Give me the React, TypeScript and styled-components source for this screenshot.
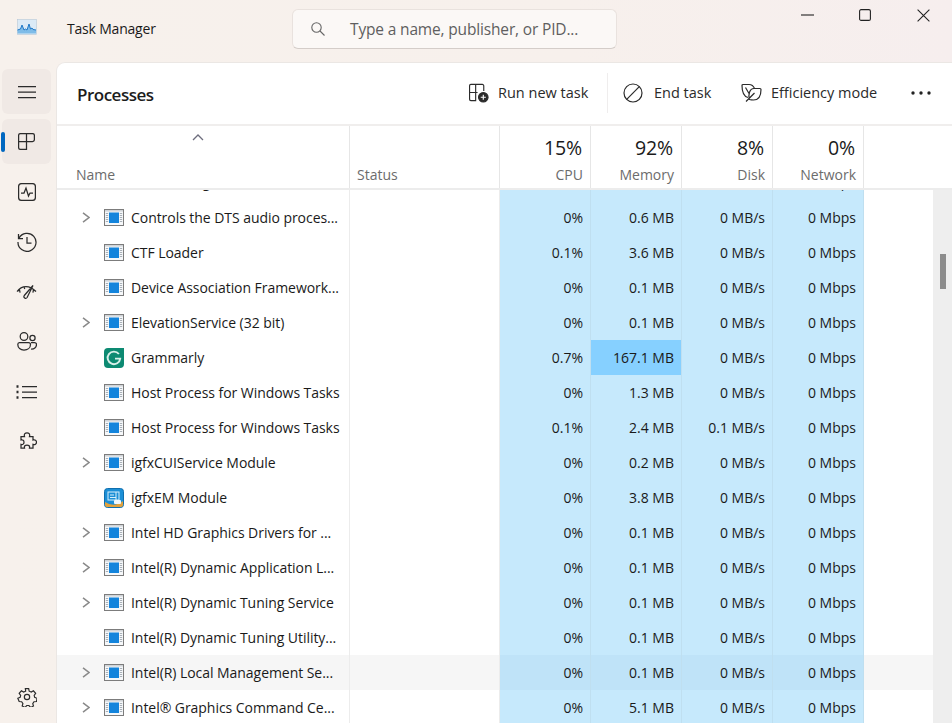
import React from "react";
import styled, { createGlobalStyle } from "styled-components";

const Global = createGlobalStyle`
  html, body { margin: 0; padding: 0; width: 952px; height: 723px; overflow: hidden; background: #f7f0eb; }
  body { font-family: "Open Sans", "Noto Sans", "Liberation Sans", sans-serif; color: #1a1a1a; }
  * { box-sizing: border-box; }
`;

const COLS = "293px 150px 91px 91px 91px 91px";

const Shell = styled.div`
  width: 952px; height: 723px; display: grid;
  grid-template-columns: 56px 1fr; grid-template-rows: 62px 1fr;
  background: linear-gradient(90deg, #f7f1ec 0%, #f7f0ec 60%, #f6eeee 100%);
  overflow: hidden;
`;
const TitleBar = styled.header`
  grid-column: 1 / 3; display: flex; align-items: flex-start; position: relative;
`;
const AppIcon = styled.svg`
  width: 20px; height: 20px; margin: 18px 0 0 17px; flex: none;
`;
const AppTitle = styled.div`
  margin: 20px 0 0 30px; width: 225px; font-size: 14px; line-height: 18px; letter-spacing: -0.2px;
`;
const Search = styled.div`
  width: 325px; height: 40px; margin-top: 9px; background: #fbf8f6;
  border: 1px solid #e9e2de; border-bottom-color: #d4cdc9; border-radius: 6px;
  display: flex; align-items: center; padding-left: 18px; gap: 25px;
  color: #5f5f5f; font-size: 15.5px; letter-spacing: -0.16px;
`;
const WindowButtons = styled.div`
  margin-left: auto; display: flex; padding-top: 7px;
`;
const WinBtn = styled.div`
  width: 58px; height: 16px; display: flex; align-items: center; justify-content: center;
`;
const Sidebar = styled.nav`
  display: flex; flex-direction: column; align-items: flex-start; padding: 7px 0 4px 2px; height: 661px;
`;
const NavBtn = styled.div<{ $active?: boolean; $tone?: boolean }>`
  width: 49px; height: 45px; border-radius: 6px; margin-bottom: 5px;
  background: ${p => (p.$active || p.$tone ? "#f0e9e5" : "transparent")};
  display: flex; align-items: center; justify-content: center; position: relative; flex: none;
`;
const BottomNavBtn = styled(NavBtn)`
  margin-top: auto; margin-bottom: 0;
`;
const ActiveMark = styled.span`
  position: absolute; left: -1px; top: 13px; width: 4px; height: 20px; border-radius: 2px; background: #0067c0;
`;
const Main = styled.main`
  background: #fff; border-top-left-radius: 9px; border: 1px solid #ebe7e4; border-width: 1px 0 0 1px;
  display: flex; flex-direction: column; overflow: hidden; position: relative; height: 661px;
`;
const Toolbar = styled.div`
  height: 63px; flex: none; display: flex; align-items: center; border-bottom: 2px solid #f0eeed; padding: 0 0 2px 20px;
`;
const PageTitle = styled.h1`
  margin: 4px 0 0 0; font-size: 17px; font-weight: 600; color: #1c1c1c; letter-spacing: -0.5px; width: 392px; flex: none;
`;
const ToolBtn = styled.div<{ $w: number; $gap?: number }>`
  width: ${p => p.$w}px; flex: none; display: flex; align-items: center; font-size: 14.5px; gap: ${p => p.$gap ?? 9}px; color: #2a2a2a; white-space: nowrap;
`;
const ToolSep = styled.div`
  width: 1px; height: 40px; background: #efeded; margin: 0 15px 0 0; flex: none;
`;
const HeaderRow = styled.div`
  display: grid; grid-template-columns: ${COLS}; height: 64px; flex: none;
  border-bottom: 2px solid #ececec;
`;
const HeadCell = styled.div<{ $right?: boolean; $first?: boolean }>`
  border-right: 1px solid #e6e6e6; position: relative; display: flex; flex-direction: column; justify-content: flex-end;
  padding: 0 7px 4px ${p => (p.$first ? 19 : 7)}px; text-align: ${p => (p.$right ? "right" : "left")};
`;
const HeadPct = styled.div`
  font-size: 19.5px; line-height: 24px; color: #1a1a1a; margin: 0 1px 6px 0; letter-spacing: -0.1px;
`;
const HeadLabel = styled.div`
  font-size: 14px; line-height: 18px; color: #6c6c6c; letter-spacing: 0;
`;
const SortCaret = styled.svg`
  position: absolute; left: 135px; top: 8px; width: 12px; height: 7px;
`;
const Rows = styled.div`
  flex: 1; overflow: hidden; position: relative;
`;
const Row = styled.div<{ $hover?: boolean; $clipped?: boolean }>`
  display: grid; grid-template-columns: ${COLS};
  height: ${p => (p.$clipped ? 37 : 35)}px;
  margin-top: ${p => (p.$clipped ? -27 : 0)}px;
  background: ${p => (p.$hover ? "#f6f6f6" : "transparent")};
`;
const NameCell = styled.div`
  border-right: 1px solid #ececec; display: flex; align-items: center; padding-left: 24px; font-size: 14px; letter-spacing: -0.05px; color: #1a1a1a;
  min-width: 0; white-space: nowrap; overflow: hidden;
`;
const ChevronSlot = styled.div`
  width: 23px; flex: none; display: flex; align-items: center; padding-left: 1px;
`;
const IconSlot = styled.div`
  width: 27px; flex: none; display: flex; align-items: center;
`;
const StatusCell = styled.div`
  border-right: 1px solid #ececec;
`;
const DataCell = styled.div<{ $hot?: boolean; $hover?: boolean }>`
  background: ${p => (p.$hot ? "#86d0ff" : p.$hover ? "#bfe3f8" : "#c6e9fc")};
  border-right: 1px solid #bfdff0;
  display: flex; align-items: center; justify-content: flex-end; padding-right: 7px;
  font-size: 14px; letter-spacing: 0; color: #1a1a1a; white-space: nowrap;
`;
const ScrollTrack = styled.div`
  position: absolute; right: 0; top: 127px; bottom: 0; width: 19px; background: #eeeeee;
`;
const ScrollThumb = styled.div`
  position: absolute; left: 7px; top: 64px; width: 6px; height: 35px; background: #8c8c8c;
`;

const Chevron = () => (
  <svg width="8" height="11" viewBox="0 0 8 11"><path d="M1 .8l6 4.700-6 4.700" fill="none" stroke="#8a8a8a" strokeWidth="1.500" /></svg>
);
const ProcIcon = () => (
  <svg width="20" height="17" viewBox="0 0 20 17">
    <rect x=".5" y=".5" width="19" height="16" fill="#f6f8fa" stroke="#7c7c7c" />
    <rect x="1" y="1" width="18" height="1.600" fill="#d0d4d8" />
    <rect x="5" y="3.500" width="10" height="10.500" fill="#1384dc" />
    <path d="M1.800 4.500h2.400M1.800 6.500h2.400M1.800 8.500h2.400M1.800 10.500h2.400M1.800 12.500h2.400M15.800 4.500h2.400M15.800 6.500h2.400M15.800 8.500h2.400M15.800 10.500h2.400M15.800 12.500h2.400" stroke="#a8b0b8" />
  </svg>
);
const GrammarlyIcon = () => (
  <svg width="20" height="20" viewBox="0 0 20 20">
    <path d="M4 0h16v16a4 4 0 0 1-4 4H4a4 4 0 0 1-4-4V4a4 4 0 0 1 4-4z" fill="#0d8a72" />
    <path d="M14.900 6A6.300 6.300 0 1 0 16.200 10.600H11" fill="none" stroke="#d8efe9" strokeWidth="1.900" />
  </svg>
);
const EmIcon = () => (
  <svg width="20" height="20" viewBox="0 0 20 20">
    <rect x=".5" y=".5" width="19" height="19" rx="3" fill="#1c8fd6" stroke="#0f6fae" />
    <path d="M1 14q9 6 18-1v4a2 2 0 0 1-2 2H3a2 2 0 0 1-2-2z" fill="#e2a13b" />
    <rect x="4" y="4" width="11" height="8" fill="none" stroke="#d8f0fb" />
    <path d="M6 7h4M6 9.500h6M12 4v8" stroke="#d8f0fb" />
    <rect x="10" y="12" width="7" height="4" rx="1" fill="#eef7fc" />
  </svg>
);

const S = { fill: "none", stroke: "#2b2b2b", strokeWidth: 1.25 } as const;

const navIcons: React.ReactNode[] = [
  <svg key="0" width="18" height="14" viewBox="0 0 18 14" {...S}><path d="M0 1.500h18M0 7h18M0 12.500h18" /></svg>,
  <svg key="1" width="17" height="17" viewBox="0 0 17 17" {...S}><path d="M8.500.6H2.500A1.900 1.900 0 0 0 .6 2.500v12a1.900 1.900 0 0 0 1.900 1.900h6zM8.500.6h6a1.900 1.900 0 0 1 1.900 1.900v4.100a1.900 1.900 0 0 1-1.900 1.900H.6" /></svg>,
  <svg key="2" width="18" height="18" viewBox="0 0 18 18" {...S}><rect x=".6" y=".6" width="16.800" height="16.800" rx="3" /><path d="M3 10h3l2-5 2.500 8 1.500-3h3" /></svg>,
  <svg key="3" width="20" height="20" viewBox="0 0 20 20" {...S}><path d="M1.500 2v4.500H6M2 6.200A9 9 0 1 1 1 10M10 5v6h4.500" /></svg>,
  <svg key="4" width="21" height="14" viewBox="0 0 21 14" {...S}><path d="M1 6.500C3.500 3 6 1.500 10 1.500c4 0 7 1.800 10 5M1 6.500l2.500-1.600.6 2.800M20 6.500l-2.500-1.700-.6 2.900M8 1.500l.7 2.500M17 .5L8.300 10.500a1.700 1.700 0 0 0 2.800 2z" /></svg>,
  <svg key="5" width="20" height="19" viewBox="0 0 20 19" {...S}><circle cx="7" cy="4.500" r="3.800" /><circle cx="15.500" cy="6" r="2.600" /><path d="M2.500 10.500h9a2 2 0 0 1 2 2c0 3.500-3 5.500-6.500 5.500S.8 16 .8 12.500a2 2 0 0 1 1.700-2zM14 10.500h3.500a2 2 0 0 1 2 2c0 3-2.500 4.800-5.500 4.500" /></svg>,
  <svg key="6" width="21" height="14" viewBox="0 0 21 14" {...S}><path d="M6 1.500h15M6 7h15M6 12.500h15" /><path d="M.5 1.500h2M.5 7h2M.5 12.500h2" strokeWidth="2.500" /></svg>,
  <svg key="7" width="20" height="20" viewBox="0 0 20 20" {...S}><path d="M7.500 4.500C6.800 2 8.300.8 10 .8s3.200 1.200 2.500 3.700H16V8c2-.7 3.500.5 3.500 2.200S18 13 16 12.400V16h-3.500c.5-2-.7-3-2.500-3s-3 1-2.500 3H4v-3.600c1.800.6 3-.6 3-2.200S5.800 7.500 4 8V4.500z" /></svg>,
];

type P = { name: string; chev?: boolean; icon?: "g" | "e"; cpu: string; mem: string; disk?: string; hot?: boolean; hover?: boolean };
const data: P[] = [
  { name: "Controls the DTS audio proces...", chev: true, cpu: "0%", mem: "0.6 MB" },
  { name: "CTF Loader", cpu: "0.1%", mem: "3.6 MB" },
  { name: "Device Association Framework...", cpu: "0%", mem: "0.1 MB" },
  { name: "ElevationService (32 bit)", chev: true, cpu: "0%", mem: "0.1 MB" },
  { name: "Grammarly", icon: "g", cpu: "0.7%", mem: "167.1 MB", hot: true },
  { name: "Host Process for Windows Tasks", cpu: "0%", mem: "1.3 MB" },
  { name: "Host Process for Windows Tasks", cpu: "0.1%", mem: "2.4 MB", disk: "0.1 MB/s" },
  { name: "igfxCUIService Module", chev: true, cpu: "0%", mem: "0.2 MB" },
  { name: "igfxEM Module", icon: "e", cpu: "0%", mem: "3.8 MB" },
  { name: "Intel HD Graphics Drivers for ...", chev: true, cpu: "0%", mem: "0.1 MB" },
  { name: "Intel(R) Dynamic Application L...", chev: true, cpu: "0%", mem: "0.1 MB" },
  { name: "Intel(R) Dynamic Tuning Service", chev: true, cpu: "0%", mem: "0.1 MB" },
  { name: "Intel(R) Dynamic Tuning Utility...", cpu: "0%", mem: "0.1 MB" },
  { name: "Intel(R) Local Management Se...", chev: true, cpu: "0%", mem: "0.1 MB", hover: true },
  { name: "Intel® Graphics Command Ce...", chev: true, cpu: "0%", mem: "5.1 MB" },
];

const heads = [["15%", "CPU"], ["92%", "Memory"], ["8%", "Disk"], ["0%", "Network"]];

export default function App() {
  return (
    <Shell>
      <Global />
      <TitleBar>
        <AppIcon viewBox="0 0 20 20">
          <rect x=".5" y="1.500" width="19" height="15" fill="#dbeaf6" stroke="#b8c8d8" strokeWidth=".6" />
          <path d="M.5 12l3-1 1.500-4 2 5 1.500-1 1.500 1 2-6 1.500 5 1.500-1 1 1.500 3 .5v3.500H.5z" fill="#7fbce8" />
          <path d="M.5 12l3-1 1.500-4 2 5 1.500-1 1.500 1 2-6 1.500 5 1.500-1 1 1.500 3 .5" fill="none" stroke="#1f78c8" strokeWidth="1" />
        </AppIcon>
        <AppTitle>Task Manager</AppTitle>
        <Search>
          <svg width="14" height="14" viewBox="0 0 14 14" fill="none" stroke="#666" strokeWidth="1.100"><circle cx="5.500" cy="5.500" r="4.700" /><path d="M9 9l4.500 4.500" /></svg>
          <span>Type a name, publisher, or PID...</span>
        </Search>
        <WindowButtons>
          <WinBtn><svg width="13" height="2" viewBox="0 0 13 2"><path d="M0 1h13" stroke="#222" strokeWidth="1.100" /></svg></WinBtn>
          <WinBtn><svg width="12" height="12" viewBox="0 0 12 12" fill="none"><rect x=".6" y=".6" width="10.800" height="10.800" rx="1.500" stroke="#222" strokeWidth="1.100" /></svg></WinBtn>
          <WinBtn><svg width="13" height="13" viewBox="0 0 13 13"><path d="M.6.6l11.800 11.800M12.400.6L.6 12.400" stroke="#222" strokeWidth="1.100" /></svg></WinBtn>
        </WindowButtons>
      </TitleBar>
      <Sidebar>
        {navIcons.map((ic, i) => (
          <NavBtn key={i} $tone={i === 0} $active={i === 1}>
            {i === 1 && <ActiveMark />}
            {ic}
          </NavBtn>
        ))}
        <BottomNavBtn>
          <svg width="20" height="20" viewBox="0 0 24 24" {...S} strokeWidth={1.400}>
            <circle cx="12" cy="12" r="3.200" />
            <path d="M10 2h4l.6 3 2.500 1.100 2.600-1.600 2.700 3-1.800 2.500.6 2.500 2.800 1-.6 3.900-3 .3-1.500 2.200.9 2.900-3.500 1.700-2-2.300h-2.600l-2 2.300-3.500-1.700.9-2.900-1.500-2.200-3-.3L1 13.500l2.800-1 .6-2.500-1.800-2.500 2.700-3 2.600 1.600L10.400 5z" />
          </svg>
        </BottomNavBtn>
      </Sidebar>
      <Main>
        <Toolbar>
          <PageTitle>Processes</PageTitle>
          <ToolBtn $w={138}>
            <svg width="20" height="20" viewBox="0 0 21 20" fill="none" stroke="#2b2b2b" strokeWidth="1.200">
              <path d="M2 1h5v17H2A1.500 1.500 0 0 1 .6 16.500v-14A1.500 1.500 0 0 1 2 1zM7 1h7a1.500 1.500 0 0 1 1.500 1.500V8M.6 9.500h8.400" />
              <circle cx="15" cy="14.500" r="5" fill="#2b2b2b" />
              <path d="M15 11.800v5.400M12.300 14.500h5.400" stroke="#fff" />
            </svg>
            Run new task
          </ToolBtn>
          <ToolSep />
          <ToolBtn $w={118} $gap={11}>
            <svg width="20" height="20" viewBox="0 0 20 20" fill="none" stroke="#2b2b2b" strokeWidth="1.200"><circle cx="10" cy="10" r="9" /><path d="M3.700 16.300L16.300 3.700" /></svg>
            End task
          </ToolBtn>
          <ToolBtn $w={170}>
            <svg width="21" height="19" viewBox="0 0 21 19" fill="none" stroke="#2b2b2b" strokeWidth="1.200">
              <path d="M7 14.500C3 13.500 1 8.500 1 2.500 1 1.800 1.500 1.500 2 1.500h6c2.500 0 4.500 1.500 5.500 4" />
              <path d="M8.500 16.500C7 12 8.500 5.500 13 5.500h6c.6 0 1 .4 1 1 0 6-2 10.500-7.500 10.500-1.500 0-3-.2-4-.5zM5 18.500l8.500-8.500M4.500 4.500L8 10.500" />
            </svg>
            Efficiency mode
          </ToolBtn>
          <svg width="20" height="4" viewBox="0 0 20 4" fill="#222"><circle cx="2" cy="2" r="1.700" /><circle cx="10" cy="2" r="1.700" /><circle cx="18" cy="2" r="1.700" /></svg>
        </Toolbar>
        <HeaderRow>
          <HeadCell $first>
            <SortCaret viewBox="0 0 12 7"><path d="M1 6l5-5 5 5" fill="none" stroke="#6d6d7d" strokeWidth="1.300" /></SortCaret>
            <HeadLabel>Name</HeadLabel>
          </HeadCell>
          <HeadCell><HeadLabel>Status</HeadLabel></HeadCell>
          {heads.map(([pct, label]) => (
            <HeadCell $right key={label}>
              <HeadPct>{pct}</HeadPct>
              <HeadLabel>{label}</HeadLabel>
            </HeadCell>
          ))}
        </HeaderRow>
        <Rows>
          <Row $clipped>
            <NameCell>
              <ChevronSlot />
              <IconSlot />
              COM Surrogate
            </NameCell>
            <StatusCell />
            <DataCell /><DataCell /><DataCell />
            <DataCell>0 Mbps</DataCell>
          </Row>
          {data.map((r, i) => (
            <Row key={i} $hover={r.hover}>
              <NameCell>
                <ChevronSlot>{r.chev && <Chevron />}</ChevronSlot>
                <IconSlot>{r.icon === "g" ? <GrammarlyIcon /> : r.icon === "e" ? <EmIcon /> : <ProcIcon />}</IconSlot>
                {r.name}
              </NameCell>
              <StatusCell />
              <DataCell $hover={r.hover}>{r.cpu}</DataCell>
              <DataCell $hover={r.hover} $hot={r.hot}>{r.mem}</DataCell>
              <DataCell $hover={r.hover}>{r.disk ?? "0 MB/s"}</DataCell>
              <DataCell $hover={r.hover}>0 Mbps</DataCell>
            </Row>
          ))}
        </Rows>
        <ScrollTrack><ScrollThumb /></ScrollTrack>
      </Main>
    </Shell>
  );
}
